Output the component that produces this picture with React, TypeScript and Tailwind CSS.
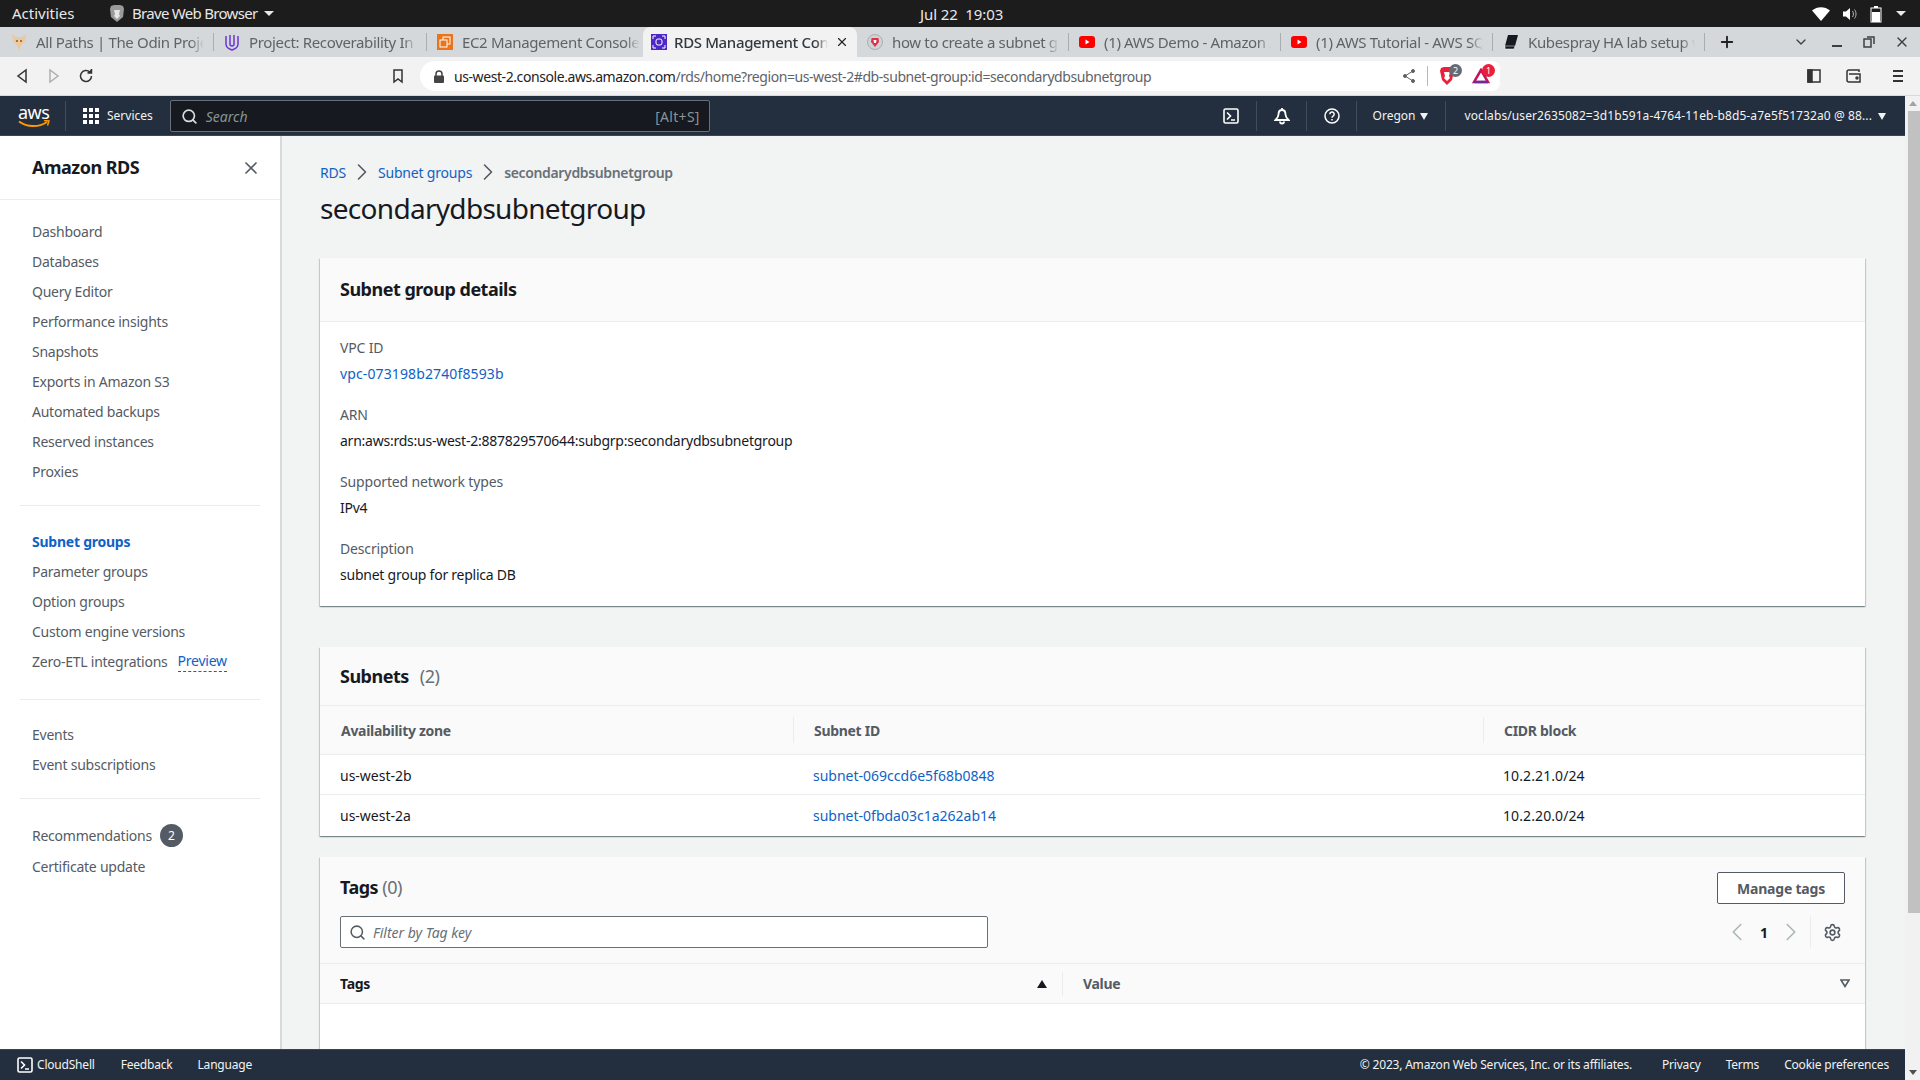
import React from 'react';
import { ChevronDown, ChevronLeft, ChevronRight, Plus, Search, Settings, X } from 'lucide-react';

const sans = "font-['Noto_Sans',sans-serif]";

const tabs = [
  { title: 'All Paths | The Odin Project', icon: 'odin' },
  { title: 'Project: Recoverability In AWS', icon: 'udacity' },
  { title: 'EC2 Management Console', icon: 'ec2' },
  { title: 'RDS Management Console', icon: 'rds', active: true },
  { title: 'how to create a subnet group', icon: 'brave' },
  { title: '(1) AWS Demo - Amazon Aurora', icon: 'yt' },
  { title: '(1) AWS Tutorial - AWS SQS', icon: 'yt' },
  { title: 'Kubespray HA lab setup with', icon: 'book' },
];

const TabIcon = ({ kind }: { kind: string }) => {
  if (kind === 'odin')
    return (
      <svg width="16" height="18" viewBox="0 0 16 18" className="shrink-0">
        <path d="M1 1l4 3h6l4-3-1 7-3 3-3 6-3-6-3-3z" fill="#e9c9a0" />
        <path d="M5 7h2v2H5zM9 7h2v2H9z" fill="#a8743c" />
      </svg>
    );
  if (kind === 'udacity')
    return (
      <svg width="16" height="18" viewBox="0 0 16 18" fill="none" className="shrink-0" stroke="#6b35d6" strokeWidth="1.5">
        <path d="M2 3v8c0 3 2.500 5 6 6 3.500-1 6-3 6-6V3" />
        <path d="M6 2v9c0 1 .8 2 2 2s2-1 2-2V2" />
      </svg>
    );
  if (kind === 'ec2')
    return (
      <svg width="16" height="16" viewBox="0 0 16 16" fill="none" className="shrink-0">
        <rect width="16" height="16" fill="#e8741c" />
        <rect x="6" y="3" width="7" height="7" stroke="#fff" />
        <rect x="3" y="6" width="7" height="7" stroke="#fff" fill="#e8741c" />
      </svg>
    );
  if (kind === 'rds')
    return (
      <svg width="16" height="16" viewBox="0 0 16 16" fill="none" className="shrink-0">
        <rect width="16" height="16" fill="#4d27c8" />
        <rect x="5" y="5" width="6" height="6" rx="2" stroke="#fff" />
        <path d="M2 2h3M11 2h3v3M2 14h3M11 14h3v-3M2 2v3M2 14v-3" stroke="#fff" />
      </svg>
    );
  if (kind === 'brave')
    return (
      <svg width="16" height="18" viewBox="0 0 16 18" className="shrink-0">
        <circle cx="8" cy="9" r="7.500" fill="#cfd3d6" stroke="#a9adb0" />
        <path d="M4.500 5h7l.5 4-4 5-4-5z" fill="#e0304a" />
        <path d="M6.500 7h3l-.5 3H7z" fill="#fff" />
      </svg>
    );
  if (kind === 'yt')
    return (
      <svg width="16" height="12" viewBox="0 0 16 12" className="shrink-0">
        <rect width="16" height="12" rx="3" fill="#f00" />
        <path d="M6.500 3.500v5l4-2.500z" fill="#fff" />
      </svg>
    );
  return (
    <svg width="16" height="16" viewBox="0 0 16 16" className="shrink-0">
      <path d="M5 1h10l-3 11H2z" fill="#16191f" />
      <path d="M2 12h10l-1 3H2z" fill="#16191f" stroke="#fff" strokeWidth=".5" />
    </svg>
  );
};

const TopBar = () => (
  <div className="flex h-[27px] items-center justify-between bg-[#1c1c1c] pl-3 pr-[14px] text-[15px] text-[#e8e8e8]">
    <div className="flex items-center">
      <span className="w-[97px]">Activities</span>
      <svg width="16" height="20" viewBox="0 0 16 20" className="mr-[7px]">
        <path d="M2 2l3-1h6l3 1 1 3-1 8-6 5-6-5-1-8z" fill="#9a9a9a" />
        <path d="M5 6h6l-1 4 1 2-3 3-3-3 1-2z" fill="#e5e5e5" />
      </svg>
      <span className="tracking-[-0.7px]">Brave Web Browser</span>
      <span className="ml-[7px] h-0 w-0 border-x-[5px] border-t-[5px] border-x-transparent border-t-[#e8e8e8]" />
    </div>
    <div className="absolute left-[920px] top-[3px] tracking-[-0.1px]">Jul 22&nbsp;&nbsp;19:03</div>
    <div className="flex items-center gap-[11px]">
      <svg width="18" height="14" viewBox="0 0 18 14" className="mr-[1px]">
        <path d="M0 3.500C5 -1 13 -1 18 3.500L9 14z" fill="#fff" />
      </svg>
      <svg width="16" height="16" viewBox="0 0 16 16" fill="none" className="mr-[1px]">
        <path d="M1 5.500h3L8 2v12l-4-3.500H1z" fill="#fff" />
        <path d="M10.500 5c1.200 1.500 1.200 4.500 0 6M12.500 3.500c2 2.500 2 6.500 0 9" stroke="#bbb" />
      </svg>
      <svg width="12" height="18" viewBox="0 0 12 18" fill="none" className="mr-[3px]">
        <path d="M4 1h4v2H4z" fill="#fff" />
        <rect x="1" y="3" width="10" height="14" stroke="#fff" />
        <rect x="2" y="7" width="8" height="10" fill="#fff" />
      </svg>
      <span className="h-0 w-0 border-x-[5px] border-t-[5px] border-x-transparent border-t-[#e8e8e8]" />
    </div>
  </div>
);

const TabStrip = () => (
  <div className="flex h-[30px] items-stretch bg-[#d4d8db] pl-[1px] text-[15px]">
    {tabs.map((t, i) => {
      const lastBeforeActive = i === 2;
      return (
        <div
          key={t.title}
          className={
            t.active
              ? 'ml-[3px] flex w-[214px] items-center gap-[7px] rounded-t-lg bg-[#f2f2f2] px-[8px] font-medium text-[#33383d]'
              : `flex items-center gap-[9px] pl-[10px] text-[#5f6368] ${i < 3 ? 'w-[213px]' : 'w-[212px]'}`
          }
        >
          <TabIcon kind={t.icon} />
          <span className="min-w-0 flex-1 overflow-hidden whitespace-nowrap tracking-[-0.35px] [mask-image:linear-gradient(to_right,black_92%,transparent)]">
            {t.title}
          </span>
          {t.active && <X size={14} strokeWidth={2} className="shrink-0 text-[#222]" />}
          {!t.active && !lastBeforeActive && <span className="my-auto h-[18px] w-px shrink-0 bg-[#a8adb1]" />}
        </div>
      );
    })}
    <div className="ml-[13px] flex items-center">
      <Plus size={18} strokeWidth={2.5} className="text-[#222]" />
    </div>
    <div className="ml-auto flex items-center pr-[10px] text-[#3c4043]">
      <ChevronDown size={16} strokeWidth={2} />
      <span className="ml-[23px] mt-[8px] h-[2px] w-[10px] bg-[#3c4043]" />
      <svg width="12" height="12" viewBox="0 0 12 12" fill="none" stroke="#3c4043" strokeWidth="1.500" className="ml-[21px]">
        <rect x="1" y="3" width="7" height="8" />
        <path d="M4 1h7v7" />
      </svg>
      <X size={16} strokeWidth={2} className="ml-[19px]" />
    </div>
  </div>
);

const Toolbar = () => (
  <div className="flex h-[39px] items-center border-b border-[#d9d9d9] bg-[#f2f2f2] pl-[16px] text-[#333]">
    <svg width="12" height="16" viewBox="0 0 12 16" fill="none" stroke="#333" strokeWidth="1.500">
      <path d="M10 2v12L2 8z" />
    </svg>
    <svg width="12" height="16" viewBox="0 0 12 16" fill="none" stroke="#b0b0b0" strokeWidth="1.500" className="ml-[20px]">
      <path d="M2 2v12l8-6z" />
    </svg>
    <svg width="16" height="16" viewBox="0 0 16 16" fill="none" stroke="#333" strokeWidth="1.500" className="ml-[18px]">
      <path d="M13.500 8a5.500 5.500 0 1 1-1.700-4" />
      <path d="M13.500 1v4h-4" fill="#333" />
    </svg>
    <svg width="12" height="16" viewBox="0 0 12 16" fill="none" stroke="#333" strokeWidth="1.500" className="ml-[298px]">
      <path d="M2 2h8v12l-4-3-4 3z" />
    </svg>
    <div className="ml-[16px] flex h-[30px] w-[1080px] items-center rounded-l-[15px] rounded-r-lg bg-white pl-[14px] pr-[4px]">
      <svg width="10" height="13" viewBox="0 0 10 13" className="mr-[10px]">
        <path d="M2 6V4a3 3 0 0 1 6 0v2" fill="none" stroke="#444" strokeWidth="1.500" />
        <rect y="5.500" width="10" height="7.500" rx="1" fill="#444" />
      </svg>
      <span className="text-[14px] tracking-[-0.42px] text-[#222]">
        us-west-2.console.aws.amazon.com<span className="text-[#5f6368]">/rds/home?region=us-west-2#db-subnet-group:id=secondarydbsubnetgroup</span>
      </span>
      <div className="ml-auto flex items-center">
        <svg width="14" height="16" viewBox="0 0 14 16" fill="#5f6368" stroke="#5f6368">
          <circle cx="11" cy="3" r="1.500" />
          <circle cx="3" cy="8" r="1.500" />
          <circle cx="11" cy="13" r="1.500" />
          <path d="M11 3L3 8l8 5" fill="none" />
        </svg>
        <span className="mx-[11px] h-[20px] w-px bg-[#b8b8b8]" />
        <div className="relative mr-[17px]">
          <svg width="16" height="20" viewBox="0 0 16 20">
            <path d="M2 2l3-1h6l3 1 1 3-2 9-5 5-5-5-2-9z" fill="#e8203a" />
            <path d="M5 6h6l-1 4 1 2-3 3-3-3 1-2z" fill="#fff" />
          </svg>
          <span className="absolute -top-[2px] left-[10px] flex h-[13px] w-[13px] items-center justify-center rounded-full bg-[#666a75] text-[9px] text-white">2</span>
        </div>
        <div className="relative mr-[6px]">
          <svg width="18" height="16" viewBox="0 0 18 16" fill="none">
            <path d="M9 2L2 14h14z" stroke="#c4145a" strokeWidth="2.500" />
            <path d="M2 14h14" stroke="#6a2ca0" strokeWidth="2.500" />
          </svg>
          <span className="absolute -top-[4px] left-[10px] flex h-[13px] w-[13px] items-center justify-center rounded-full bg-[#e8203a] text-[9px] text-white">1</span>
        </div>
      </div>
    </div>
    <svg width="14" height="14" viewBox="0 0 14 14" fill="none" stroke="#333" strokeWidth="1.500" className="ml-[307px]">
      <rect x="1" y="1" width="12" height="12" />
      <rect x="1" y="1" width="4" height="12" fill="#333" />
    </svg>
    <svg width="16" height="14" viewBox="0 0 16 14" fill="none" stroke="#333" strokeWidth="1.500" className="ml-[25px]">
      <path d="M13 3V1H3a2 2 0 0 0-2 2v8a2 2 0 0 0 2 2h11V5H3" />
      <circle cx="11" cy="9" r="1" />
    </svg>
    <svg width="12" height="14" viewBox="0 0 12 14" stroke="#333" strokeWidth="2" className="ml-[30px]">
      <path d="M1 2h10M1 7h10M1 12h10" />
    </svg>
  </div>
);

const NavSep = () => <span className="block h-[30px] w-px bg-[#414d5c]" />;
const Caret = ({ className = '' }: { className?: string }) => (
  <span className={`inline-block h-0 w-0 border-x-[4.500px] border-t-[7px] border-x-transparent border-t-[#f2f3f3] ${className}`} />
);

const TerminalIcon = ({ size = 16 }: { size?: number }) => (
  <svg width={size} height={size} viewBox="0 0 16 16" fill="none" stroke="#fff" strokeWidth="1.600">
    <rect x="1" y="1" width="14" height="14" rx="1.500" />
    <path d="M4 4.500L7.500 8 4 11.500M8 12h4" />
  </svg>
);

const AwsNav = () => (
  <div className={`flex h-[40px] items-center border-b border-[#3a4553] bg-[#232f3e] pl-[18px] pt-[1px] text-white ${sans}`}>
    <div className="relative h-[26px] w-[32px]">
      <span className="absolute -top-[4px] left-0 text-[18px] leading-[26px] tracking-[-0.5px]">aws</span>
      <svg width="32" height="9" viewBox="0 0 32 9" fill="none" className="absolute bottom-0 left-0">
        <path d="M1 1.500c8 6 20 6 28 .5" stroke="#f90" strokeWidth="2" />
        <path d="M26 .5l5 .5-1.500 4.500" stroke="#f90" strokeWidth="1.500" />
      </svg>
    </div>
    <span className="ml-[15px] h-[30px] w-px bg-[#414d5c]" />
    <div className="ml-[17px] grid h-[16px] w-[16px] grid-cols-3 gap-[2px]">
      {Array.from({ length: 9 }).map((_, i) => (
        <span key={i} className="bg-white" />
      ))}
    </div>
    <span className="ml-[8px] text-[12px] text-[#f2f3f3]">Services</span>
    <div className="ml-[17px] flex h-[32px] w-[540px] items-center rounded-[2px] border border-[#687078] bg-[#16191f] pl-[10px] pr-[9px] text-[14px]">
      <Search size={17} strokeWidth={2.4} className="text-[#d5dbdb]" />
      <span className="ml-[8px] italic text-[#879596]">Search</span>
      <span className="ml-auto tracking-[0.3px] text-[#879596]">[Alt+S]</span>
    </div>
    <div className="ml-auto flex items-center pr-[19px] text-[12px] text-[#f2f3f3]">
      <TerminalIcon />
      <span className="ml-[17px]"><NavSep /></span>
      <svg width="16" height="18" viewBox="0 0 16 18" fill="none" stroke="#fff" strokeWidth="1.800" className="ml-[17px]">
        <path d="M8 1v2M8 3c3 0 3.500 2.500 3.500 4.500 0 2.500 1.500 4 3 5.500h-13c1.500-1.500 3-3 3-5.500C4.500 5.500 5 3 8 3z" />
        <path d="M6 14.500a2 2 0 0 0 4 0" />
      </svg>
      <span className="ml-[16px]"><NavSep /></span>
      <svg width="16" height="16" viewBox="0 0 16 16" fill="none" stroke="#fff" strokeWidth="1.500" className="ml-[17px]">
        <circle cx="8" cy="8" r="7" />
        <path d="M5.800 6.200a2.200 2.200 0 1 1 3.300 1.900c-.7.400-1.100.8-1.100 1.700M8 11v1.500" />
      </svg>
      <span className="ml-[16px]"><NavSep /></span>
      <span className="ml-[16px]">Oregon</span>
      <Caret className="ml-[5px]" />
      <span className="ml-[17px]"><NavSep /></span>
      <span className="ml-[18px] tracking-[0.1px]">voclabs/user2635082=3d1b591a-4764-11eb-b8d5-a7e5f51732a0 @ 88...</span>
      <Caret className="ml-[6px]" />
    </div>
  </div>
);

const SideLink = ({ children, active, tall }: { children: React.ReactNode; active?: boolean; tall?: boolean }) => (
  <div className={`flex items-center text-[14px] tracking-[-0.24px] ${tall ? 'h-[31px]' : 'h-[30px]'} ${active ? 'font-bold text-[#0f62c5]' : 'text-[#545b64]'}`}>{children}</div>
);

const SideRule = () => <div className="mx-[20px] h-px bg-[#eaeded]" />;

const Sidebar = () => (
  <aside className={`w-[282px] shrink-0 border-r-[2px] border-[#d5dbdb] bg-white ${sans}`}>
    <div className="flex h-[64px] items-center justify-between border-b border-[#eaeded] pl-[32px] pr-[19px]">
      <span className="text-[18px] font-bold tracking-[-0.5px] text-[#16191f]">Amazon RDS</span>
      <X size={20} strokeWidth={2} className="text-[#545b64]" />
    </div>
    <nav className="pl-[32px] pt-[16px] pb-[19px]">
      {['Dashboard', 'Databases', 'Query Editor', 'Performance insights', 'Snapshots', 'Exports in Amazon S3', 'Automated backups', 'Reserved instances', 'Proxies'].map((l) => (
        <SideLink key={l}>{l}</SideLink>
      ))}
    </nav>
    <SideRule />
    <nav className="pl-[32px] pt-[20px] pb-[22px]">
      <SideLink active>Subnet groups</SideLink>
      <SideLink>Parameter groups</SideLink>
      <SideLink>Option groups</SideLink>
      <SideLink>Custom engine versions</SideLink>
      <SideLink tall>
        Zero-ETL integrations
        <span className="ml-[10px] border-b border-dashed border-[#0f62c5] leading-[20px] text-[#0f62c5]">Preview</span>
      </SideLink>
    </nav>
    <SideRule />
    <nav className="pl-[32px] pt-[19px] pb-[19px]">
      <SideLink>Events</SideLink>
      <SideLink>Event subscriptions</SideLink>
    </nav>
    <SideRule />
    <nav className="pl-[32px] pt-[21px]">
      <SideLink tall>
        Recommendations
        <span className="ml-[8px] flex h-[23px] w-[23px] items-center justify-center rounded-full bg-[#545b64] text-[12px] text-white">2</span>
      </SideLink>
      <SideLink>Certificate update</SideLink>
    </nav>
  </aside>
);

const Field = ({ label, children }: { label: string; children: React.ReactNode }) => (
  <div className="h-[67px]">
    <div className="text-[14px] leading-[26px] tracking-[-0.15px] text-[#545b64]">{label}</div>
    <div className="text-[14px] leading-[26px] tracking-[-0.24px] text-[#16191f]">{children}</div>
  </div>
);

const cardCls =
  'bg-white shadow-[0_1px_1px_0_rgba(0,28,36,0.3),1px_1px_1px_0_rgba(0,28,36,0.15),-1px_1px_1px_0_rgba(0,28,36,0.15)]';
const link = 'text-[#0f62c5]';

const Details = () => (
  <section className={`${cardCls} h-[348px]`}>
    <div className="flex h-[64px] items-center border-b border-[#eaeded] bg-[#fafafa] px-[20px] pb-[1px] text-[18px] font-bold tracking-[-0.5px] text-[#16191f]">
      Subnet group details
    </div>
    <div className="px-[20px] pt-[13px]">
      <Field label="VPC ID">
        <span className={`${link} tracking-[0.12px]`}>vpc-073198b2740f8593b</span>
      </Field>
      <Field label="ARN">arn:aws:rds:us-west-2:887829570644:subgrp:secondarydbsubnetgroup</Field>
      <Field label="Supported network types">IPv4</Field>
      <Field label="Description">subnet group for replica DB</Field>
    </div>
  </section>
);

const subnets = [
  { az: 'us-west-2b', id: 'subnet-069ccd6e5f68b0848', cidr: '10.2.21.0/24' },
  { az: 'us-west-2a', id: 'subnet-0fbda03c1a262ab14', cidr: '10.2.20.0/24' },
];

const Subnets = () => (
  <section className={`${cardCls} mt-[41px] h-[189px]`}>
    <div className="flex h-[59px] items-center border-b border-[#eaeded] bg-[#fafafa] px-[20px] text-[18px] font-bold tracking-[-0.5px] text-[#16191f]">
      Subnets<span className="ml-[11px] font-normal text-[#687078]">(2)</span>
    </div>
    <div className="grid grid-cols-[473px_690px_1fr]">
      <div className="col-span-3 grid h-[49px] grid-cols-subgrid items-center border-b border-[#eaeded] bg-[#fafafa] text-[14px] font-bold tracking-[-0.3px] text-[#545b64]">
        <div className="pl-[21px]">Availability zone</div>
        <div className="flex h-[26px] items-center border-l border-[#eaeded] pl-[20px]">Subnet ID</div>
        <div className="flex h-[26px] items-center border-l border-[#eaeded] pl-[20px]">CIDR block</div>
      </div>
      {subnets.map((s, i) => (
        <div key={s.id} className={`col-span-3 grid h-[40px] grid-cols-subgrid items-center text-[14px] text-[#16191f] ${i === 0 ? 'border-b border-[#eaeded] pt-[1px]' : ''}`}>
          <div className="pl-[20px]">{s.az}</div>
          <div className={`pl-[20px] ${link}`}>{s.id}</div>
          <div className="pl-[20px] tracking-[0.1px]">{s.cidr}</div>
        </div>
      ))}
    </div>
  </section>
);

const Tags = () => (
  <section className={`${cardCls} mt-[21px] h-[260px]`}>
    <div className="h-[107px] border-b border-[#eaeded] bg-[#fafafa] px-[20px]">
      <div className="flex items-start justify-between pt-[15px]">
        <div className="-mt-[1px] text-[18px] font-bold leading-[32px] tracking-[-0.5px] text-[#16191f]">
          Tags <span className="font-normal text-[#687078]">(0)</span>
        </div>
        <button className="h-[32px] w-[128px] rounded-[2px] border border-[#545b64] bg-white text-[14px] font-bold tracking-[-0.2px] text-[#545b64]">Manage tags</button>
      </div>
      <div className="mt-[12px] flex items-center justify-between">
        <div className="flex h-[32px] w-[648px] items-center rounded-[2px] border border-[#687078] bg-white pl-[8px] text-[14px]">
          <Search size={17} strokeWidth={2.2} className="text-[#545b64]" />
          <span className="ml-[7px] italic text-[#687078]">Filter by Tag key</span>
        </div>
        <div className="flex items-center pr-[3px]">
          <ChevronLeft size={30} strokeWidth={1.3} className="text-[#aab7b8]" />
          <span className="mx-[8px] text-[14px] font-bold text-[#16191f]">1</span>
          <ChevronRight size={30} strokeWidth={1.3} className="text-[#aab7b8]" />
          <span className="ml-[4px] h-[32px] w-px bg-[#eaeded]" />
          <Settings size={19} strokeWidth={2} className="ml-[12px] text-[#545b64]" />
        </div>
      </div>
    </div>
    <div className="grid h-[40px] grid-cols-[742px_1fr] items-center border-b border-[#eaeded] bg-[#fafafa] text-[14px] font-bold tracking-[-0.3px]">
      <div className="flex items-center justify-between pl-[20px] pr-[15px] text-[#16191f]">
        Tags
        <span className="h-0 w-0 border-x-[5px] border-b-[8px] border-x-transparent border-b-[#16191f]" />
      </div>
      <div className="flex h-[24px] items-center justify-between border-l border-[#eaeded] pl-[20px] pr-[15px] text-[#545b64]">
        Value
        <svg width="10" height="9" viewBox="0 0 10 9" fill="none" stroke="#545b64" strokeWidth="1.600">
          <path d="M1 1h8L5 7.500z" />
        </svg>
      </div>
    </div>
  </section>
);

const Scrollbar = () => (
  <div className="flex w-[15px] shrink-0 flex-col items-center bg-[#f1f1f1]">
    <span className="mt-[5px] h-0 w-0 border-x-[4px] border-b-[5px] border-x-transparent border-b-[#a3a3a3]" />
    <div className="mt-[5px] ml-[3px] h-[802px] w-[13px] bg-[#c1c1c1]" />
    <span className="mt-auto mb-[5px] h-0 w-0 border-x-[4px] border-t-[5px] border-x-transparent border-t-[#505050]" />
  </div>
);

const Footer = () => (
  <footer className={`flex h-[31px] shrink-0 items-center border-t border-[#3a4553] bg-[#232f3e] pl-[17px] pr-[16px] text-[12px] tracking-[-0.2px] text-[#f2f3f3] ${sans}`}>
    <TerminalIcon />
    <span className="ml-[4px]">CloudShell</span>
    <span className="ml-[26px]">Feedback</span>
    <span className="ml-[25px]">Language</span>
    <span className="ml-auto">© 2023, Amazon Web Services, Inc. or its affiliates.</span>
    <span className="ml-[30px]">Privacy</span>
    <span className="ml-[25px]">Terms</span>
    <span className="ml-[25px]">Cookie preferences</span>
  </footer>
);

export default function App() {
  return (
    <div className={`flex h-[1080px] flex-col overflow-hidden ${sans}`}>
      <TopBar />
      <TabStrip />
      <Toolbar />
      <div className="flex min-h-0 flex-1">
        <div className="flex min-w-0 flex-1 flex-col">
          <AwsNav />
          <div className="flex min-h-0 flex-1">
            <Sidebar />
            <main className="min-w-0 flex-1 overflow-hidden bg-[#f2f3f3] pl-[38px] pr-[40px]">
              <div className="mt-[26px] flex h-[20px] items-center text-[14px] tracking-[-0.2px] text-[#0f62c5]">
                <span>RDS</span>
                <ChevronRight size={28} strokeWidth={1.4} className="mx-[2px] text-[#545b64]" />
                <span>Subnet groups</span>
                <ChevronRight size={28} strokeWidth={1.4} className="mx-[2px] text-[#545b64]" />
                <span className="font-semibold tracking-[-0.35px] text-[#687078]">secondarydbsubnetgroup</span>
              </div>
              <h1 className="mt-[7px] text-[28px] leading-[38px] tracking-[-0.7px] text-[#16191f]">secondarydbsubnetgroup</h1>
              <div className="mt-[31px]">
                <Details />
                <Subnets />
                <Tags />
              </div>
            </main>
          </div>
          <Footer />
        </div>
        <Scrollbar />
      </div>
    </div>
  );
}
